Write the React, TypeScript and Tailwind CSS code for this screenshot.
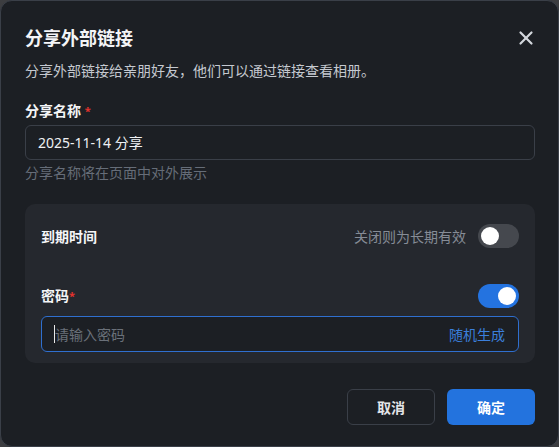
import { X } from 'lucide-react';

function Toggle({ on }: { on: boolean }) {
    return (
        <div className={`w-[41px] h-[24px] rounded-full p-[3px] flex items-center ${on ? 'bg-[#2473e0] justify-end' : 'bg-[#45484e] justify-start'}`}>
            <div className="w-[18px] h-[18px] rounded-full bg-white" />
        </div>
    );
}

export default function App() {
    return (
        <div className="w-[559px] h-[447px] bg-[#3c3d40] font-['Noto_Sans','Noto_Sans_CJK_SC',sans-serif]">
            <div className="w-full h-full flex flex-col rounded-xl border border-[#3a3f48] bg-[#1c1f24] pl-6 pr-[23px] pt-[23px] pb-[21px]">
                <div className="flex items-center justify-between h-[28px]">
                    <h2 className="text-[18px] leading-[28px] font-bold text-[#f4f5f7]">分享外部链接</h2>
                    <X className="w-[22px] h-[22px] text-[#d3d7dd] -mr-[2px]" strokeWidth={2.4} />
                </div>
                <p className="mt-2 text-[14px] leading-[22px] text-[#c5c9d0]">分享外部链接给亲朋好友，他们可以通过链接查看相册。</p>

                <div className="mt-[19px] h-[20px] text-[14px] leading-[20px] font-bold text-[#f4f5f7]">
                    分享名称 <span className="text-[#e5322d] text-[11px] leading-[20px] align-top">*</span>
                </div>
                <div className="mt-1 h-[35px] rounded-md border border-[#3a3f48] bg-[#1c1f24] flex items-center px-3 text-[14px] text-[#eef0f3]">
                    2025-11-14 分享
                </div>
                <div className="mt-[3px] text-[14px] leading-[20px] text-[#666d78]">分享名称将在页面中对外展示</div>

                <div className="mt-[21px] rounded-[10px] bg-[#25282e] px-4 pt-4 pb-[11px] flex flex-col">
                    <div className="h-8 flex items-center justify-between">
                        <span className="text-[14px] font-bold text-[#f4f5f7]">到期时间</span>
                        <div className="flex items-center gap-3">
                            <span className="text-[14px] text-[#868c96]">关闭则为长期有效</span>
                            <Toggle on={false} />
                        </div>
                    </div>
                    <div className="mt-7 h-8 flex items-center justify-between">
                        <span className="h-[20px] text-[14px] leading-[20px] font-bold text-[#f4f5f7]">
                            密码<span className="text-[#e5322d] text-[11px] leading-[20px] align-top">*</span>
                        </span>
                        <Toggle on={true} />
                    </div>
                    <div className="mt-1 h-[36px] rounded-md border border-[#2f6fcf] bg-[#1c1f24] flex items-center justify-between pl-3 pr-[13px] text-[14px]">
                        <div className="flex items-center">
                            <span className="w-px h-[18px] bg-[#e8e8e8]" />
                            <span className="text-[#6a7079]">请输入密码</span>
                        </div>
                        <span className="text-[#3b7fdc]">随机生成</span>
                    </div>
                </div>

                <div className="mt-auto flex justify-end gap-3">
                    <button className="w-[88px] h-[36px] rounded-md border border-[#3a3f48] text-[14px] font-bold text-[#e3e5e8]">取消</button>
                    <button className="w-[88px] h-[36px] rounded-md bg-[#2373de] text-[14px] font-bold text-white">确定</button>
                </div>
            </div>
        </div>
    );
}
